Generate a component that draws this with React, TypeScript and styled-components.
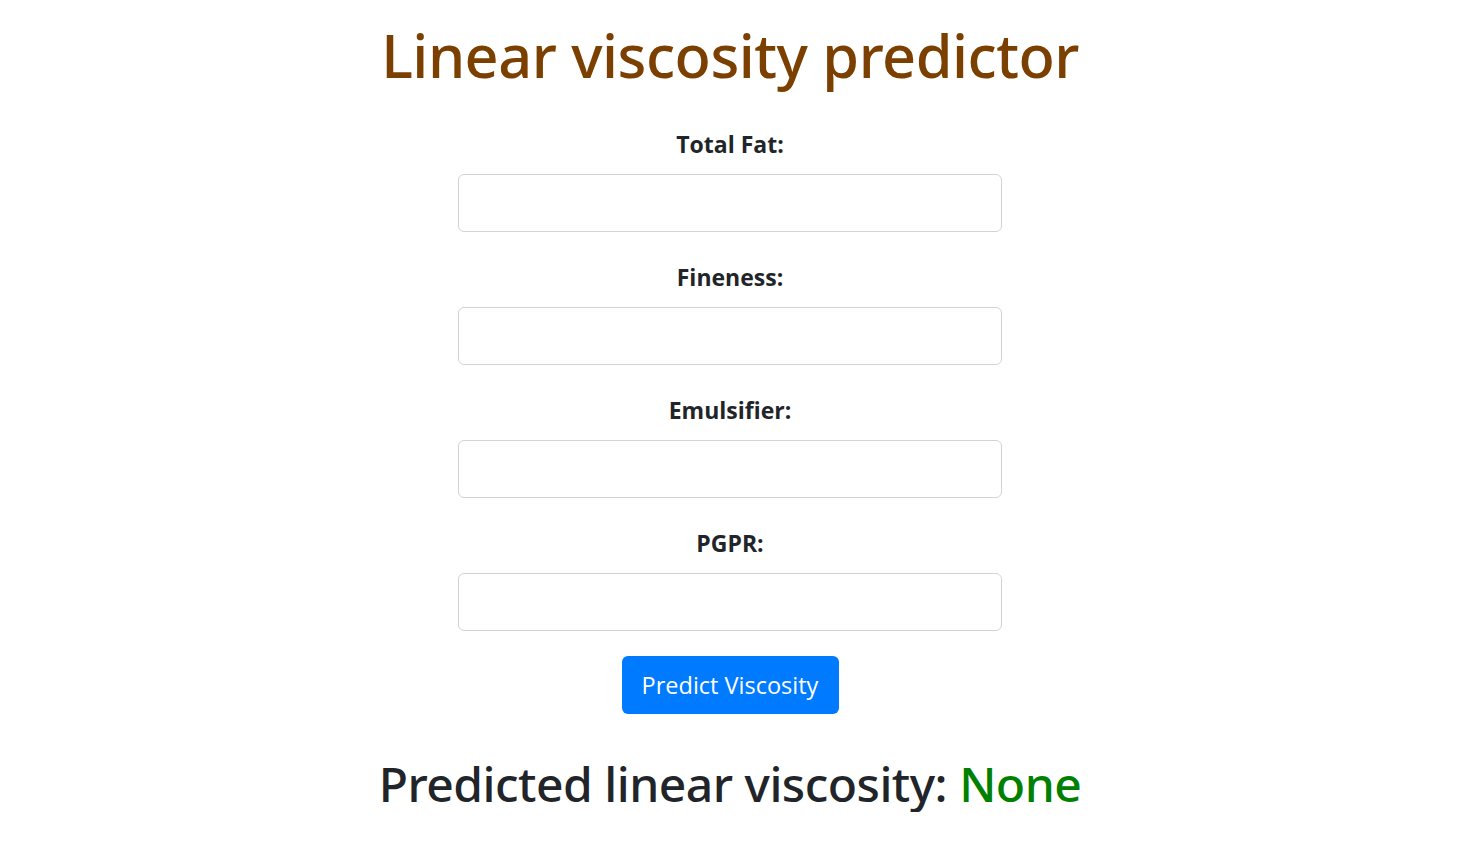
import React from "react";
import styled, { createGlobalStyle } from "styled-components";

const Global = createGlobalStyle`
  html, body { margin: 0; padding: 0; background: #fff; }
  body { font-family: "Open Sans", "Noto Sans", sans-serif; color: #212529; }
  * { box-sizing: border-box; }
`;

const Page = styled.main`
  display: flex;
  flex-direction: column;
  align-items: center;
  padding-top: 19px;
  padding-right: 20px;
`;

const Title = styled.h1`
  margin: 0 0 35px;
  font-family: "Noto Sans", "Open Sans", sans-serif;
  font-size: 59.4px;
  line-height: 72px;
  font-weight: 500;
  color: #7b3f00;
  letter-spacing: -0.5px;
`;

const Form = styled.form`
  display: flex;
  flex-direction: column;
  align-items: center;
  width: 544px;
`;

const Group = styled.div`
  display: flex;
  flex-direction: column;
  align-items: center;
  width: 100%;
  margin-bottom: 27px;
  &:last-of-type { margin-bottom: 25px; }
`;

const Label = styled.label`
  font-size: 23px;
  line-height: 36px;
  font-weight: 700;
  color: #212529;
  margin-bottom: 12px;
`;

const Input = styled.input`
  width: 100%;
  height: 58px;
  border: 1.5px solid #ced4da;
  border-radius: 6px;
  padding: 0 18px;
  font-size: 24px;
  font-family: inherit;
  background: #fff;
`;

const Button = styled.button`
  height: 58px;
  padding: 0 20px;
  width: 217px;
  border: none;
  border-radius: 6px;
  background: #007bff;
  color: #fff;
  font-family: inherit;
  font-size: 23.5px;
  cursor: pointer;
`;

const Result = styled.h2`
  margin: 42px 0 0;
  font-family: "Noto Sans", "Open Sans", sans-serif;
  font-size: 48px;
  line-height: 56px;
  font-weight: 500;
  color: #212529;
  letter-spacing: -0.5px;
`;

const Value = styled.span`
  color: #008000;
`;

const fields = ["Total Fat:", "Fineness:", "Emulsifier:", "PGPR:"];

export default function App() {
  return (
    <>
      <Global />
      <Page>
        <Title>Linear viscosity predictor</Title>
        <Form onSubmit={(e) => e.preventDefault()}>
          {fields.map((f) => (
            <Group key={f}>
              <Label>{f}</Label>
              <Input type="text" />
            </Group>
          ))}
          <Button type="submit">Predict Viscosity</Button>
        </Form>
        <Result>
          Predicted linear viscosity: <Value>None</Value>
        </Result>
      </Page>
    </>
  );
}
